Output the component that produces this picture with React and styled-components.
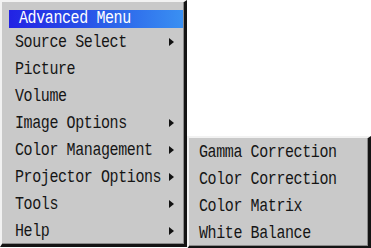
import React from "react";
import styled, { createGlobalStyle } from "styled-components";

const Global = createGlobalStyle`
  html, body { margin: 0; padding: 0; background: #ffffff; }
  body { font-family: "Liberation Mono", "DejaVu Sans Mono", monospace; }
`;

const Stage = styled.div`
  display: flex;
  align-items: flex-start;
  width: 371px;
  height: 248px;
  overflow: hidden;
`;

const Panel = styled.div`
  box-sizing: border-box;
  width: ${(p) => p.$width}px;
  margin-top: ${(p) => p.$top || 0}px;
  background: #c9c9c9;
  border-top: 2px solid #f2f2f2;
  border-left: 2px solid #f2f2f2;
  border-right: 3px solid #141414;
  border-bottom: 3px solid #141414;
  box-shadow: inset -1px -1px 0 #8a8a8a;
  padding: ${(p) => p.$pad || "0"};
  display: flex;
  flex-direction: column;
`;

const Title = styled.div`
  height: 18px;
  background: linear-gradient(to right, #2222e4 0%, #2a5ee9 55%, #3a90f2 100%);
  color: #ffffff;
  font-size: 15px;
  letter-spacing: -0.4px;
  padding-left: 10px;
  white-space: nowrap;
`;

const Label = styled.span`
  display: inline-block;
  line-height: ${(p) => p.$lh || 27}px;
  transform: translateY(${(p) => p.$dy ?? 1.5}px) scaleY(1.22);
  transform-origin: 50% 55%;
`;

const Row = styled.div`
  display: flex;
  align-items: center;
  height: 27px;
  padding-left: ${(p) => p.$indent}px;
  padding-right: ${(p) => p.$right || 0}px;
  color: #151515;
  font-size: 15px;
  letter-spacing: -0.4px;
  white-space: nowrap;
`;

const Arrow = styled.span`
  margin-left: auto;
  width: 0;
  height: 0;
  border-top: 4.5px solid transparent;
  border-bottom: 4.5px solid transparent;
  border-left: 5px solid #111111;
`;

const main = [
  { t: "Source Select", sub: true },
  { t: "Picture" },
  { t: "Volume" },
  { t: "Image Options", sub: true },
  { t: "Color Management", sub: true },
  { t: "Projector Options", sub: true },
  { t: "Tools", sub: true },
  { t: "Help", sub: true },
];

const sub = ["Gamma Correction", "Color Correction", "Color Matrix", "White Balance"];

export default function App() {
  return (
    <>
      <Global />
      <Stage>
        <Panel $width={187} $pad="8px 1px 0 7px">
          <Title>
            <Label $lh={18} $dy={1}>Advanced Menu</Label>
          </Title>
          {main.map((m) => (
            <Row key={m.t} $indent={6} $right={9}>
              <Label>{m.t}</Label>
              {m.sub && <Arrow />}
            </Row>
          ))}
        </Panel>
        <Panel $width={184} $top={136}>
          {sub.map((s) => (
            <Row key={s} $indent={10}>
              <Label>{s}</Label>
            </Row>
          ))}
        </Panel>
      </Stage>
    </>
  );
}
